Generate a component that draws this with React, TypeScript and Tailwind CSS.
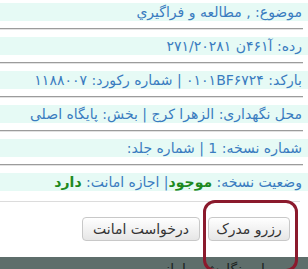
import React from 'react'

function Sep() {
    return <div className="my-[7px] h-[2px] border-t border-t-[#9c9c9c] border-b border-b-[#e2e2e2] mr-[5px]"></div>
}

function Row({ children }: { children: React.ReactNode }) {
    return (
        <div className="h-[18px] leading-[18px] bg-[#e6faf5] pr-[6px] text-[#3a7cc0] whitespace-nowrap">
            {children}
        </div>
    )
}

export default function App() {
    return (
        <div dir="rtl" className="relative w-[308px] h-[269px] overflow-hidden bg-white text-[14px]" style={{ fontFamily: '"DejaVu Sans", Tahoma, sans-serif' }}>
            <div className="pt-[3px]">
                <Row>موضوع: , مطالعه و فراگیري</Row>
                <Sep />
                <Row>رده: آ۴۶۱ن ۲۷۱/۲۰۲۸۱</Row>
                <Sep />
                <Row>بارکد: ۰۱۰۱BF۶۷۲۴ | شماره رکورد: ۱۱۸۸۰۰۷</Row>
                <Sep />
                <Row>محل نگهداری: الزهرا کرج | بخش: پایگاه اصلی</Row>
                <Sep />
                <Row>شماره نسخه: 1 | شماره جلد:</Row>
                <Sep />
                <Row>
                    وضعیت نسخه: <b className="text-[#1f8a1f]">موجود</b>| اجازه امانت: <span className="text-[#1f8a1f] font-semibold">دارد</span>
                </Row>
            </div>
            <div className="mt-[10px] h-px bg-[#dcdcdc] mr-[8px]"></div>
            <div className="flex gap-[8px] pr-[18px] mt-[15px]">
                <button className="h-[24px] w-[82px] rounded-[4px] border border-[#c8c8c8] bg-gradient-to-b from-white to-[#e6e6e6] text-[#333]">رزرو مدرک</button>
                <button className="h-[24px] w-[118px] rounded-[4px] border border-[#c8c8c8] bg-gradient-to-b from-white to-[#e6e6e6] text-[#333]">درخواست امانت</button>
            </div>
            <div className="mt-[16px] h-[30px] bg-[#5e6e6b] pr-[43px] pt-[1px] text-[#1c2422] leading-[22px]">
                این نگارش سامانه
            </div>
            <div className="absolute left-[203px] top-[200px] w-[95px] h-[72px] border-[3px] border-[#8b1a2d] rounded-[12px]"></div>
        </div>
    )
}
